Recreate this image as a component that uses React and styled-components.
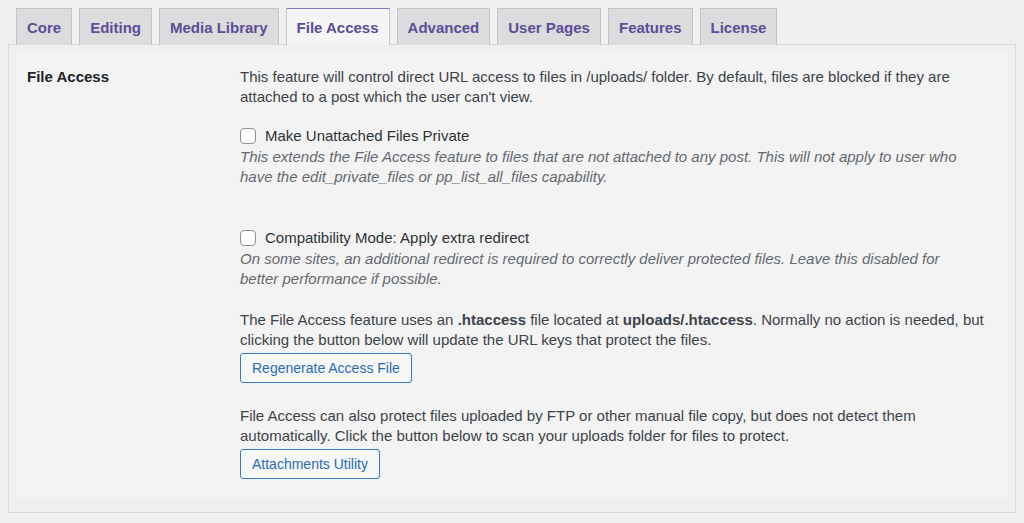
import React from 'react';
import styled, { createGlobalStyle, css } from 'styled-components';

const GlobalStyle = createGlobalStyle`
  html, body {
    margin: 0;
    padding: 0;
    background: #f0f0f1;
  }
  body {
    font-family: "Liberation Sans", Arial, sans-serif;
    color: #3c434a;
  }
`;

const Page = styled.div`
  padding: 8px 8px 11px;
`;

const TabBar = styled.nav`
  display: flex;
  gap: 7px;
  padding-left: 8px;
  position: relative;
  z-index: 1;
  margin-bottom: -1px;
`;

const Tab = styled.a`
  display: flex;
  align-items: center;
  box-sizing: border-box;
  height: 37px;
  padding: 0 10px;
  background: #dcdcde;
  border: 1px solid #c3c4c7;
  border-bottom: none;
  color: #5b4e96;
  font-size: 15px;
  font-weight: 600;
  text-decoration: none;
  cursor: pointer;
  ${(p) =>
    p.active &&
    css`
      background: #f5f5f5;
      border-top-color: #8578bd;
    `}
`;

const Panel = styled.div`
  border: 1px solid #d9d9db;
  background: #efefef;
  padding: 7px 7px 13px;
`;

const Inner = styled.div`
  background: #f3f3f3;
  display: grid;
  grid-template-columns: 224px 1fr;
  padding: 15px 0 20px;
`;

const Label = styled.div`
  padding-left: 11px;
  font-size: 15px;
  font-weight: 700;
  line-height: 20px;
  color: #1d2327;
`;

const Content = styled.div`
  padding-right: 7px;
  font-size: 15px;
  line-height: 20px;
`;

const Para = styled.p`
  margin: 0;
  margin-top: ${(p) => p.top || 0}px;
`;

const CheckRow = styled.label`
  display: flex;
  align-items: center;
  gap: 9px;
  margin-top: ${(p) => p.top || 0}px;
  font-size: 15px;
  color: #2c3338;
  line-height: 20px;
`;

const Box = styled.input.attrs({ type: 'checkbox' })`
  appearance: none;
  width: 16px;
  height: 16px;
  margin: 0;
  border: 1px solid #8c8f94;
  border-radius: 4px;
  background: #fff;
`;

const Hint = styled.p`
  margin: 1px 25px 0 0;
  font-style: italic;
  color: #646970;
`;

const Button = styled.button`
  display: block;
  margin-top: 3px;
  height: 30px;
  padding: 0 11px;
  border: 1px solid #3a78c0;
  border-radius: 3px;
  background: #f6f7f7;
  color: #2b6cb0;
  font-family: inherit;
  font-size: 14px;
  cursor: pointer;
`;

const tabs = [
  'Core',
  'Editing',
  'Media Library',
  'File Access',
  'Advanced',
  'User Pages',
  'Features',
  'License',
];

const App = () => {
  return (
    <>
      <GlobalStyle />
      <Page>
        <TabBar>
          {tabs.map((t) => (
            <Tab key={t} active={t === 'File Access'}>
              {t}
            </Tab>
          ))}
        </TabBar>
        <Panel>
          <Inner>
            <Label>File Access</Label>
            <Content>
              <Para>
                This feature will control direct URL access to files in
                /uploads/ folder. By default, files are blocked if they are
                attached to a post which the user can't view.
              </Para>

              <CheckRow top={19}>
                <Box />
                Make Unattached Files Private
              </CheckRow>
              <Hint>
                This extends the File Access feature to files that are not
                attached to any post. This will not apply to user who have the
                edit_private_files or pp_list_all_files capability.
              </Hint>

              <CheckRow top={41}>
                <Box />
                Compatibility Mode: Apply extra redirect
              </CheckRow>
              <Hint>
                On some sites, an additional redirect is required to correctly
                deliver protected files. Leave this disabled for better
                performance if possible.
              </Hint>

              <Para top={21}>
                The File Access feature uses an <b>.htaccess</b> file located at{' '}
                <b>uploads/.htaccess</b>. Normally no action is needed, but
                clicking the button below will update the URL keys that protect
                the files.
              </Para>
              <Button>Regenerate Access File</Button>

              <Para top={23}>
                File Access can also protect files uploaded by FTP or other
                manual file copy, but does not detect them automatically. Click
                the button below to scan your uploads folder for files to
                protect.
              </Para>
              <Button>Attachments Utility</Button>
            </Content>
          </Inner>
        </Panel>
      </Page>
    </>
  );
};

export default App;
